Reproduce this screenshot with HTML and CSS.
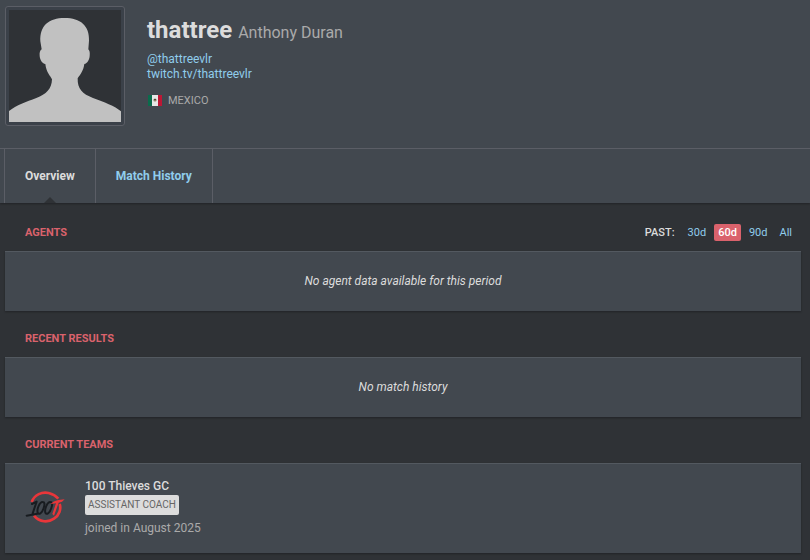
FILE: index.html
```html
<!DOCTYPE html>
<html lang="en">
<head>
  <meta charset="UTF-8">
  <meta name="viewport" content="width=device-width, initial-scale=1.0">
  <title>thattree - Player Profile</title>
  <link rel="stylesheet" href="styles.css">
</head>
<body>
  <header class="player-header">
    <div class="player-info">
      <div class="avatar">
        <svg viewBox="0 0 336 336" role="img" aria-label="Player photo">
          <path d="M0 336V303C22 286 52 275 82 264C112 252 128 238 129 208C124 197 112 188 109 162C99 160 93 150 92 138C91 128 93 121 98 118L94 94C92 47 119 24 167 24C214 24 242 47 240 92L238 118C242 122 243 128 242 138C241 150 235 160 226 162C223 183 214 193 206 205C205 237 220 252 252 264C284 276 318 288 336 304V336Z"/>
        </svg>
      </div>
      <div class="player-text">
        <div class="player-names">
          <h1>thattree</h1>
          <h2>Anthony Duran</h2>
        </div>
        <a class="social" href="#">@thattreevlr</a>
        <a class="social" href="#">twitch.tv/thattreevlr</a>
        <div class="country">
          <svg class="flag" viewBox="0 0 14 11" aria-hidden="true">
            <path fill="#0b6b4c" d="M0 0h5v11H0z"/>
            <path fill="#e6e6e6" d="M4 0h6v11H4z"/>
            <path fill="#bd1735" d="M10 0h4v11h-4z"/>
            <circle cx="7" cy="5" r="1.6" fill="#8b8068"/>
            <path fill="#514431" d="M6 4h2v1H6z"/>
          </svg>
          MEXICO
        </div>
      </div>
    </div>
    <nav class="tabs">
      <a class="tab active" href="#">Overview</a>
      <a class="tab" href="#">Match History</a>
    </nav>
  </header>

  <main>
    <section>
      <div class="section-head">
        <h2>Agents</h2>
        <div class="filter">
          <span class="filter-label">PAST:</span>
          <a href="#">30d</a>
          <a class="active" href="#">60d</a>
          <a href="#">90d</a>
          <a href="#">All</a>
        </div>
      </div>
      <div class="card empty">No agent data available for this period</div>
    </section>

    <section>
      <div class="section-head">
        <h2>Recent Results</h2>
      </div>
      <div class="card empty">No match history</div>
    </section>

    <section>
      <div class="section-head">
        <h2>Current Teams</h2>
      </div>
      <a class="card team" href="#">
        <svg class="team-logo" viewBox="0 4 120 100" aria-hidden="true">
          <!-- ring -->
          <g fill="none" stroke="#e8363a" stroke-width="8">
            <path d="M20 36C29 13 51 5 71 9C84 12 93 18 100 26"/>
            <path d="M27 77C44 98 70 98 87 86C103 76 109 57 104 42"/>
          </g>
          <!-- brush lettering -->
          <g fill="none" stroke="#181c20" stroke-width="6" stroke-linecap="round" stroke-linejoin="round">
            <path d="M21 42L35 35L22 73M5 77L37 71"/>
            <path d="M53 36C44 35 35 58 38 68C41 77 52 68 56 54C60 42 59 36 53 36Z"/>
            <path d="M76 36C67 35 58 58 61 68C64 77 75 68 79 54C83 42 82 36 76 36Z"/>
          </g>
          <path fill="#e8363a" d="M77 42C88 32 101 29 119 28L111 35L101 38L87 77L82 72L93 40Z"/>
        </svg>
        <div class="team-text">
          <div class="team-name">100 Thieves GC</div>
          <span class="role">Assistant Coach</span>
          <div class="joined">joined in August 2025</div>
        </div>
      </a>
    </section>
  </main>
</body>
</html>
```

FILE: styles.css
```css
* {
  box-sizing: border-box;
}

body {
  margin: 0;
  background: #2f3236;
  color: #dcdcdc;
  font-family: Roboto, sans-serif;
  font-size: 12px;
  line-height: 15px;
}

h1,
h2 {
  margin: 0;
}

a {
  color: #90cdec;
  text-decoration: none;
}

/* header */
.player-header {
  background: #42484f;
  box-shadow: 0 1px 2px rgba(0, 0, 0, 0.3);
}

.player-info {
  display: flex;
  gap: 22px;
  padding: 6px 5px 22px;
}

.avatar {
  width: 120px;
  height: 120px;
  padding: 3px;
  border: 1px solid #5b5e66;
  border-radius: 3px;
  background: #3b4149;
}

.avatar svg {
  display: block;
  width: 100%;
  background: #2f3236;
  fill: #c1c1c1;
}

.player-text {
  display: flex;
  flex-direction: column;
  align-items: flex-start;
  padding-top: 9px;
}

.player-names {
  display: flex;
  align-items: baseline;
  gap: 6px;
  margin-bottom: 4px;
  line-height: 30px;
}

.player-names h1 {
  font-size: 24px;
  font-weight: 700;
}

.player-names h2 {
  color: #aaa;
  font-size: 16px;
  font-weight: 400;
}

.country {
  display: flex;
  align-items: center;
  gap: 6px;
  margin-top: 11px;
  padding-left: 1px;
  color: #aaa;
  font-size: 11px;
}

.flag {
  width: 14px;
  height: 11px;
}

.tabs {
  display: flex;
  padding-left: 4px;
  border-top: 1px solid #5b5e66;
}

.tab {
  position: relative;
  padding: 0 20px;
  border-right: 1px solid #5b5e66;
  font-weight: 700;
  line-height: 54px;
}

.tab:first-child {
  border-left: 1px solid #5b5e66;
}

.tab.active {
  color: #dcdcdc;
}

.tab.active::after {
  content: "";
  position: absolute;
  bottom: 0;
  left: 50%;
  margin-left: -6px;
  border: 6px solid transparent;
  border-top: 0;
  border-bottom-color: #2f3236;
}

/* sections */
main {
  padding: 8px 9px 6px 5px;
}

.section-head {
  display: flex;
  align-items: center;
  justify-content: space-between;
  height: 40px;
  padding: 2px 5px 0 20px;
}

section + section {
  margin-top: 6px;
}

.section-head h2 {
  color: #da626c;
  font-size: 11px;
  font-weight: 700;
  text-transform: uppercase;
}

.filter {
  display: flex;
  align-items: center;
  gap: 4px;
  font-size: 11px;
}

.filter-label {
  margin-right: 5px;
  font-weight: 500;
}

.filter a {
  padding: 1px 4px;
  border-radius: 2px;
}

.filter a.active {
  background: #da626c;
  color: #fff;
  font-weight: 500;
}

.card {
  border-top: 1px solid #535960;
  background: #42484f;
  box-shadow: 0 1px 2px rgba(0, 0, 0, 0.3);
}

.empty {
  padding: 22px 20px;
  font-style: italic;
  text-align: center;
}

.team {
  display: flex;
  align-items: center;
  gap: 20px;
  padding: 15px 20px 17px;
}

.team-logo {
  width: 40px;
  height: 34px;
}

.team-name {
  color: #dcdcdc;
  font-weight: 500;
}

.role {
  display: inline-block;
  margin: 1px 0 6px;
  padding: 0 3px;
  border-radius: 2px;
  background: #dcdcdc;
  color: #666;
  font-size: 10px;
  line-height: 20px;
  text-transform: uppercase;
}

.joined {
  color: #aaa;
}
```
